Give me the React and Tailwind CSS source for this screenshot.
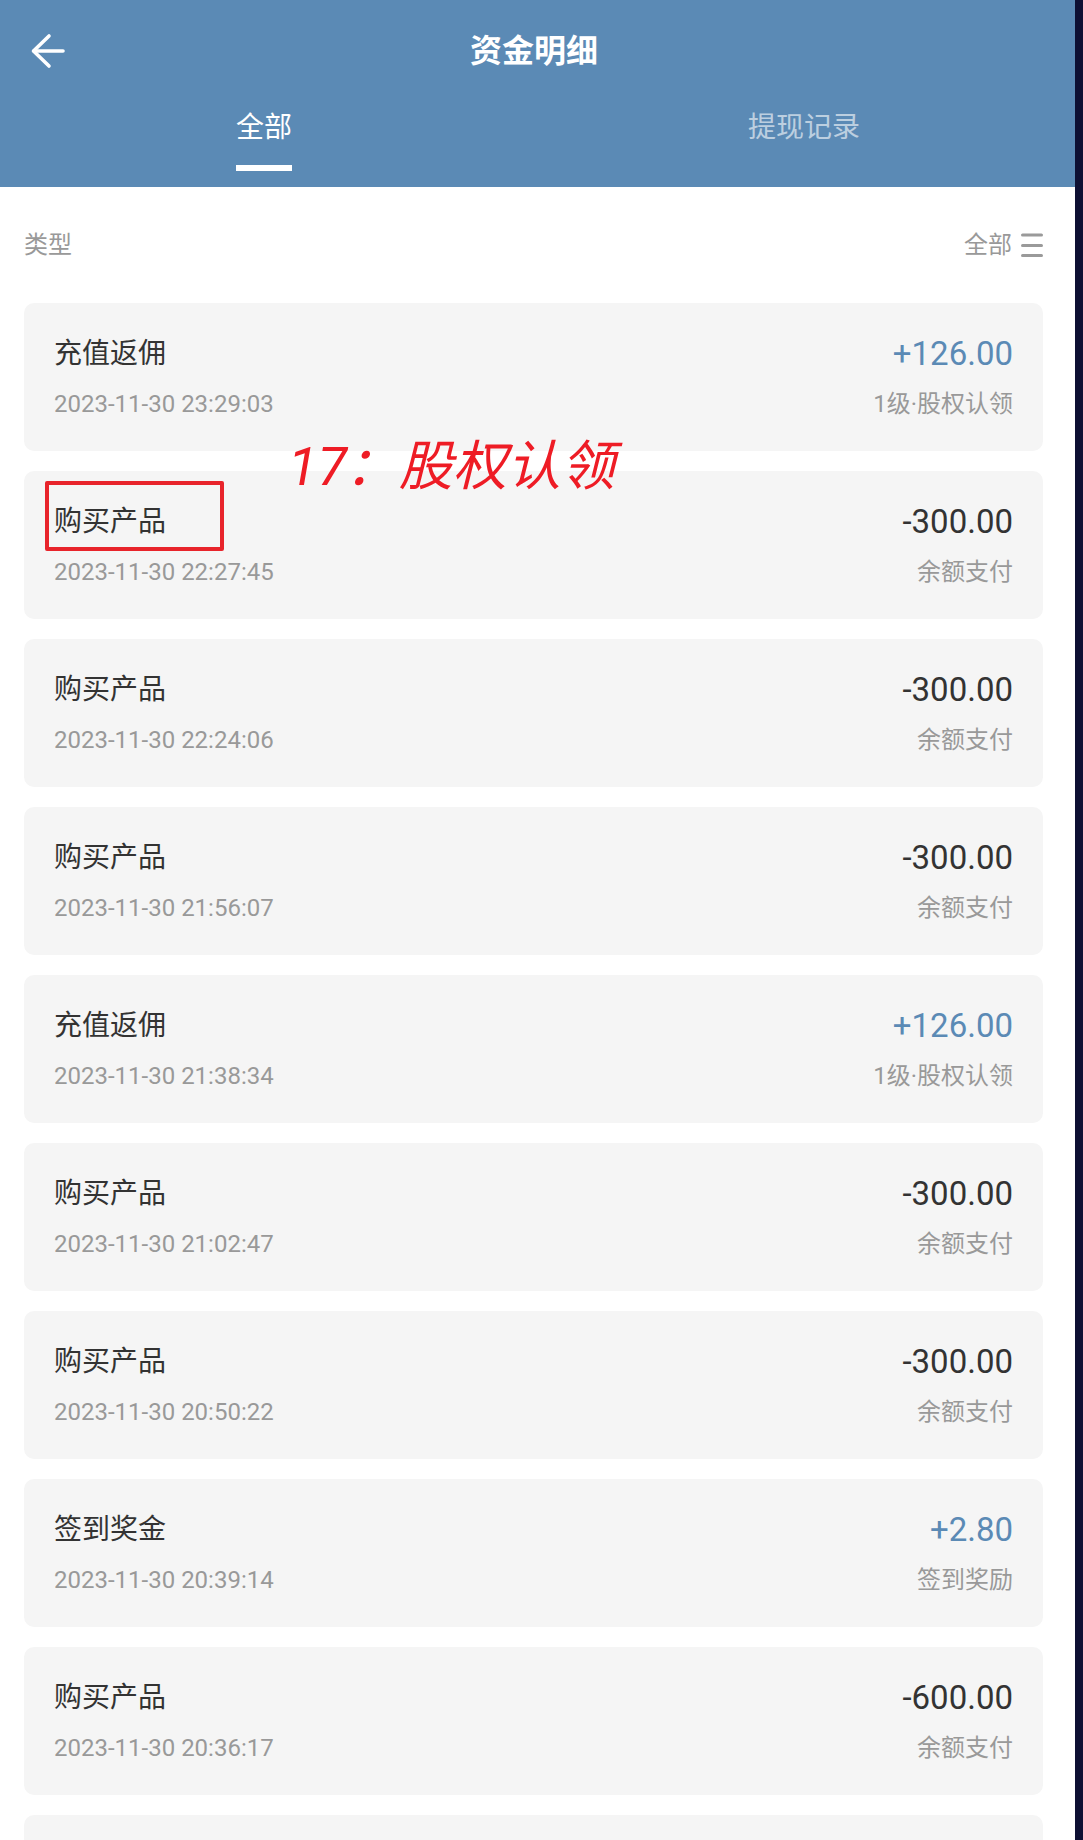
import { useState } from 'react';

const RECORDS = [
  { title: '充值返佣', time: '2023-11-30 23:29:03', amount: '+126.00', note: '1级·股权认领', income: true },
  { title: '购买产品', time: '2023-11-30 22:27:45', amount: '-300.00', note: '余额支付' },
  { title: '购买产品', time: '2023-11-30 22:24:06', amount: '-300.00', note: '余额支付' },
  { title: '购买产品', time: '2023-11-30 21:56:07', amount: '-300.00', note: '余额支付' },
  { title: '充值返佣', time: '2023-11-30 21:38:34', amount: '+126.00', note: '1级·股权认领', income: true },
  { title: '购买产品', time: '2023-11-30 21:02:47', amount: '-300.00', note: '余额支付' },
  { title: '购买产品', time: '2023-11-30 20:50:22', amount: '-300.00', note: '余额支付' },
  { title: '签到奖金', time: '2023-11-30 20:39:14', amount: '+2.80', note: '签到奖励', income: true },
  { title: '购买产品', time: '2023-11-30 20:36:17', amount: '-600.00', note: '余额支付' },
];

const TABS = ['全部', '提现记录'];

const BackArrow = () => (
  <svg width="36" height="36" viewBox="0 0 36 36" fill="none" stroke="white" strokeWidth="3.6" strokeLinecap="round" strokeLinejoin="round">
    <path d="M33 18H4" />
    <path d="M19 3 3.5 18 19 33" />
  </svg>
);

const MenuIcon = () => (
  <svg width="22" height="24" viewBox="0 0 22 24" fill="none" stroke="#9a9a9a" strokeWidth="3" strokeLinecap="round">
    <path d="M1.5 2h19" />
    <path d="M1.5 12.5h19" />
    <path d="M1.5 22.5h19" />
  </svg>
);

const App = () => {
  const [tab, setTab] = useState(0);

  return (
    <div className="flex h-[1840px] w-full overflow-hidden bg-white font-['Roboto','Noto_Sans_CJK_SC',sans-serif]">
      <div className="relative w-[1075px] shrink-0">
        {/* Header */}
        <header className="overflow-hidden bg-[#5b8ab5]">
          <div className="relative flex h-[102px] items-center justify-center pr-[7px]">
            <button className="absolute left-[30px] top-[33px]">
              <BackArrow />
            </button>
            <h1 className="text-[32px] font-bold text-white">资金明细</h1>
          </div>
          <div className="-ml-[6px] flex h-[85px] w-[1080px]">
            {TABS.map((t, i) => (
              <button key={t} onClick={() => setTab(i)} className="flex flex-1 flex-col items-center">
                <span className={`text-[28px] leading-[52px] ${tab === i ? 'text-white' : 'text-white/60'}`}>{t}</span>
                <span className={`mt-[11px] h-[6px] w-[56px] ${tab === i ? 'bg-white' : 'bg-transparent'}`}></span>
              </button>
            ))}
          </div>
        </header>

        <div className="pl-6 pr-8">
          <div className="flex h-[116px] items-center justify-between text-[24px] text-[#999]">
            <span>类型</span>
            <div className="flex items-center gap-[9px]">
              <span>全部</span>
              <MenuIcon />
            </div>
          </div>

          {/* Records */}
          <div className="flex flex-col gap-5">
            {RECORDS.map((r, idx) => (
              <div key={idx} className="rounded-[10px] bg-[#f5f5f5] px-[30px] pt-[30px] pb-[31px]">
                <div className="flex h-[42px] items-center justify-between">
                  <span className="text-[28px] text-[#333]">{r.title}</span>
                  <span className={`text-[33px] ${r.income ? 'text-[#5b8ab5]' : 'text-[#333]'}`}>{r.amount}</span>
                </div>
                <div className="mt-[13px] flex h-[32px] items-center justify-between text-[24px] text-[#999]">
                  <span>{r.time}</span>
                  <span>{r.note}</span>
                </div>
              </div>
            ))}
            {/* next record, scrolled below the fold */}
            <div className="h-[148px] rounded-[10px] bg-[#f5f5f5]"></div>
          </div>
        </div>

        {/* annotation on top of the screenshot */}
        <div className="absolute left-[288px] top-[440px] text-[54px] italic leading-[54px] text-[#ee1c25] whitespace-nowrap">
          17<span className="-ml-[2px]">：</span>股权认领
        </div>
        <div className="absolute left-[45px] top-[481px] h-[70px] w-[179px] rounded-[2px] border-4 border-[#e8242b]"></div>
      </div>
      <div className="flex-1 bg-[#0e1033]"></div>
    </div>
  );
};

export default App;
